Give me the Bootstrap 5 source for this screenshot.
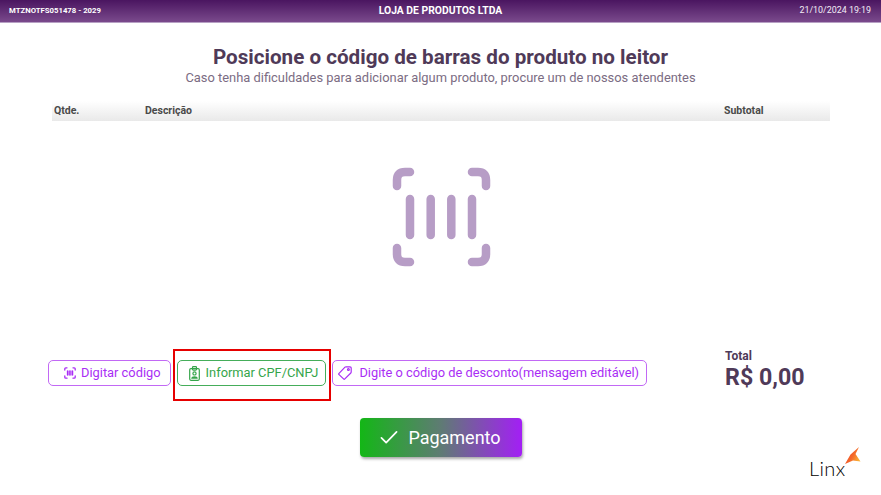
<!doctype html>
<html lang="pt-BR">
<head>
<meta charset="utf-8">
<title>Loja de Produtos</title>
<link rel="stylesheet" href="https://cdn.jsdelivr.net/npm/bootstrap@5.3.0/dist/css/bootstrap.min.css">
<style>
html,body{height:495px;overflow:hidden}
body{font-family:Roboto,"Liberation Sans",sans-serif;background:#fff;position:relative}
.topbar{height:23px;padding:0 9px;background:linear-gradient(180deg,#4a1560 0%,#7a4a8c 100%);color:#fff;border-bottom:1px solid #b7a0c4}
.topbar-side{width:200px;font-size:7.75px;font-weight:700}
.topbar-date{width:200px;font-size:8.9px;font-weight:400;color:#f4eef7;padding-right:1px}
.topbar-title{font-size:10.35px;font-weight:700}
.head-title{margin:23px 0 0;font-size:20.64px;line-height:22px;font-weight:700;color:#4f3a58}
.head-sub{margin:2px 0 0;font-size:12.9px;line-height:16px;color:#7b6c83}
.items-head{margin:15px 51px 0 52px;height:20px;padding-left:2px;background:linear-gradient(180deg,#fff 0%,#e9e9e9 100%);font-size:10.5px;font-weight:700;color:#4a4a4a}
.col-qty{width:91px}
.col-sub{width:106px}
.scan-zone{height:226px;padding:46px 0 0 1px}
.action-row{height:52px;padding-left:48px}
.act{height:26px;padding:0 9px 0 15px;font-size:12.85px;line-height:24px;border-radius:5px;border-width:1px;color:#a92df5;border-color:#c269f5;background:#fff;white-space:nowrap;gap:5px}
.act-green{color:#35a54a;border-color:#45ad5a;margin-left:6px;padding:0 7px 0 11px;gap:6px}
.act-tag{margin-left:6px;padding:0 7px 0 5px;gap:7px}
.total-box{margin-left:78px;margin-top:-7px;color:#4f3a58}
.total-label{font-size:12px;line-height:14px;font-weight:700}
.total-value{font-size:23.2px;line-height:28px;font-weight:700}
.pay-wrap{margin-top:19px}
.pay-btn{width:162px;height:39px;border:0;border-radius:4px;color:#fff;font-size:18px;padding:0;gap:10px;background:linear-gradient(90deg,#13b716 0%,#5f7b74 50%,#a31ff5 100%);box-shadow:1px 2px 3px rgba(0,0,0,.35)}
.mark-box{position:absolute;left:173px;top:349px;width:158px;height:52px;border:2px solid #e60000;pointer-events:none}
.brand{position:absolute;left:809px;top:445px;width:56px;height:36px}
.brand-word{position:absolute;left:0;top:12px;font-family:Lato,Roboto,sans-serif;font-size:20px;line-height:22px;font-weight:300;color:#000;letter-spacing:.4px}
.brand svg{position:absolute;left:36px;top:1px}
</style>
</head>
<body>
<header class="topbar d-flex align-items-center justify-content-between">
  <div class="topbar-side">MTZNOTFS051478 - 2029</div>
  <div class="topbar-title">LOJA DE PRODUTOS LTDA</div>
  <div class="topbar-date text-end">21/10/2024 19:19</div>
</header>
<main>
  <div class="text-center">
    <h1 class="head-title">Posicione o código de barras do produto no leitor</h1>
    <p class="head-sub">Caso tenha dificuldades para adicionar algum produto, procure um de nossos atendentes</p>
  </div>
  <div class="items-head d-flex align-items-center">
    <div class="col-qty">Qtde.</div>
    <div class="flex-grow-1">Descrição</div>
    <div class="col-sub">Subtotal</div>
  </div>
  <div class="scan-zone d-flex justify-content-center">
    <svg width="100" height="100" viewBox="0 0 100 100" fill="none" stroke="#b79dc6" stroke-width="8.5" stroke-linecap="round" stroke-linejoin="round">
      <path d="M6 19V13Q6 5 14 5H19"/>
      <path d="M81 5H87Q95 5 95 13V19"/>
      <path d="M6 81V87Q6 95 14 95H19"/>
      <path d="M81 95H87Q95 95 95 87V81"/>
      <path d="M19 32V68M39.7 32V68M60.3 32V68M81 32V68"/>
    </svg>
  </div>
  <div class="action-row d-flex align-items-center">
    <button type="button" class="btn act d-flex align-items-center">
      <svg width="12" height="12" viewBox="0 0 12 12" fill="none" stroke="#a92df5" stroke-width="1.3" stroke-linecap="round"><path d="M.8 3V1.8Q.8.8 1.8.8H3M9 .8H10.2Q11.2.8 11.2 1.8V3M.8 9V10.2Q.8 11.2 1.8 11.2H3M9 11.2H10.2Q11.2 11.2 11.2 10.2V9M3.5 4V8M5.2 4V8M6.9 4V8M8.6 4V8"/></svg>
      <span>Digitar código</span>
    </button>
    <button type="button" class="btn act act-green d-flex align-items-center">
      <svg width="11" height="15" viewBox="0 0 11 15" fill="none" stroke="#35a54a" stroke-width="1.2" stroke-linejoin="round"><rect x=".7" y="2.6" width="9.6" height="11.7" rx="1.2"/><rect x="3.5" y=".7" width="4" height="3.4" rx=".8"/><circle cx="5.5" cy="7.4" r="1.6"/><path d="M2.8 12.2C3.1 10.4 7.9 10.4 8.2 12.2Z"/></svg>
      <span>Informar CPF/CNPJ</span>
    </button>
    <button type="button" class="btn act act-tag d-flex align-items-center">
      <svg width="14" height="14" viewBox="0 0 14 14" fill="none" stroke="#a92df5" stroke-width="1.2" stroke-linejoin="round"><path d="M.8 7.6L7 1.2Q7.4.8 8 .8H12Q13.2.8 13.2 2V6Q13.2 6.6 12.8 7L6.6 13.2Q6.2 13.6 5.8 13.2L.8 8.4Q.4 8 .8 7.6Z"/><circle cx="10.4" cy="3.6" r=".9"/></svg>
      <span>Digite o código de desconto(mensagem editável)</span>
    </button>
    <div class="total-box">
      <div class="total-label">Total</div>
      <div class="total-value">R$ 0,00</div>
    </div>
  </div>
  <div class="pay-wrap d-flex justify-content-center">
    <button type="button" class="btn pay-btn d-flex align-items-center justify-content-center">
      <svg width="18" height="15" viewBox="0 0 19 15" fill="none" stroke="#fff" stroke-width="1.8" stroke-linecap="round" stroke-linejoin="round"><path d="M1.5 8L6.5 13L17.5 1.5"/></svg>
      <span>Pagamento</span>
    </button>
  </div>
</main>
<div class="mark-box"></div>
<div class="brand">
  <span class="brand-word">Linx</span>
  <svg width="16" height="19" viewBox="0 0 16 19"><defs><linearGradient id="bolt" x1="0" y1="0" x2="1" y2="0.6"><stop offset="0" stop-color="#ee3a24"/><stop offset=".6" stop-color="#f4682a"/><stop offset="1" stop-color="#fbb034"/></linearGradient></defs><path d="M14 1L5.5 8.5L0 18L8 14.5L15.5 15.5L10.5 8Z" fill="url(#bolt)"/></svg>
</div>
</body>
</html>
